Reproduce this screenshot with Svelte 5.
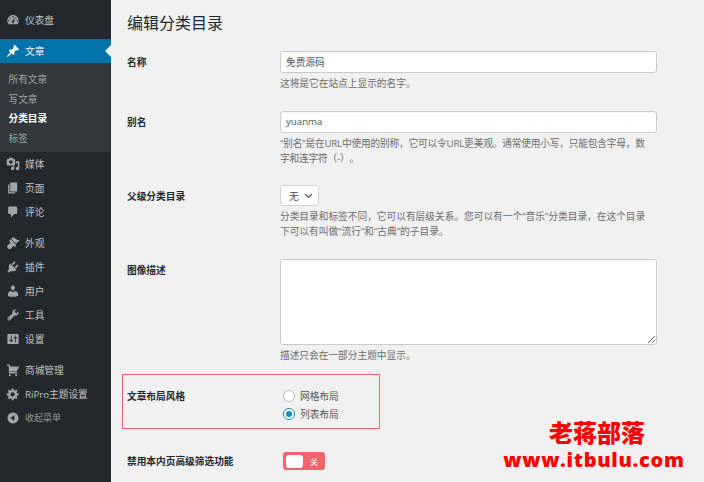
<script lang="ts">
	const menu = [
		{ label: '仪表盘', d: 'M3.76 16h12.48c1.1-1.37 1.76-3.11 1.76-5 0-4.42-3.58-8-8-8s-8 3.58-8 8c0 1.89.66 3.63 1.76 5zM10 4c.55 0 1 .45 1 1s-.45 1-1 1-1-.45-1-1 .45-1 1-1zM6 6c.55 0 1 .45 1 1s-.45 1-1 1-1-.45-1-1 .45-1 1-1zm8 0c.55 0 1 .45 1 1s-.45 1-1 1-1-.45-1-1 .45-1 1-1zm-5.37 5.55L12 7v6c0 1.1-.9 2-2 2s-2-.9-2-2c0-.57.24-1.08.63-1.45zM4 10c.55 0 1 .45 1 1s-.45 1-1 1-1-.45-1-1 .45-1 1-1zm12 0c.55 0 1 .45 1 1s-.45 1-1 1-1-.45-1-1 .45-1 1-1zm-5 3c0-.55-.45-1-1-1s-1 .45-1 1 .45 1 1 1 1-.45 1-1z' },
		{ label: '文章', active: true, sep: true, d: 'M10.44 3.02l1.82-1.82 6.36 6.35-1.83 1.82c-1.05-.68-2.48-.57-3.41.36l-.75.75c-.92.93-1.04 2.35-.35 3.41l-1.83 1.82-2.41-2.41-2.8 2.79c-.42.42-3.38 2.71-3.8 2.29s1.86-3.39 2.28-3.81l2.79-2.79L4.1 9.36l1.83-1.82c1.05.69 2.48.57 3.4-.36l.75-.75c.93-.92 1.05-2.35.36-3.41z' },
		{ label: '媒体', d: 'M13 11V4c0-.55-.45-1-1-1h-1.67L9 1H5L3.67 3H2c-.55 0-1 .45-1 1v7c0 .55.45 1 1 1h10c.55 0 1-.45 1-1zM7 4.5c1.38 0 2.5 1.12 2.5 2.5S8.38 9.5 7 9.5 4.5 8.38 4.5 7 5.62 4.5 7 4.5zM14 6h5v10.5c0 1.38-1.12 2.5-2.5 2.5S14 17.88 14 16.5s1.12-2.5 2.5-2.5c.17 0 .34.02.5.05V9h-3V6zm-4 8.05V13h2v3.5c0 1.38-1.12 2.5-2.5 2.5S7 17.88 7 16.5 8.12 14 9.5 14c.17 0 .34.02.5.05z' },
		{ label: '页面', d: 'M6 15V2h10v13H6zm-1 1h8v2H3V5h2v11z' },
		{ label: '评论', d: 'M5 2h9c1.1 0 2 .9 2 2v7c0 1.1-.9 2-2 2h-2l-5 5v-5H5c-1.1 0-2-.9-2-2V4c0-1.1.9-2 2-2z' },
		{ label: '外观', sep: true, d: 'M14.48 11.06L7.41 3.99l1.5-1.5c.5-.56 2.3-.47 3.51.32 1.21.8 1.43 1.28 2.91 2.1 1.18.64 2.45 1.26 4.45.85zM13.77 11.77L6.7 4.7 4.93 6.47c-.39.39-.39 1.02 0 1.41l1.06 1.06c.39.39.39 1.03 0 1.42-.6.6-1.43 1.11-2.21 1.69-.35.26-.7.53-1.01.84-1.35 1.34-1.34 3.5 0 4.84 1.34 1.34 3.5 1.35 4.84 0 .31-.31.58-.66.84-1.01.58-.78 1.09-1.61 1.69-2.21.39-.39 1.03-.39 1.42 0l1.06 1.06c.39.39 1.02.39 1.41 0z' },
		{ label: '插件', d: 'M13.11 4.36L9.87 7.6 8 5.73l3.24-3.24c.35-.34 1.05-.2 1.56.32.52.51.66 1.21.31 1.55zm-8 1.77l.91-1.12 9.01 9.01-1.19.84c-.71.71-2.63 1.16-3.82 1.16H6.14L4.9 17.26c-.59.59-1.54.59-2.12 0-.59-.58-.59-1.53 0-2.12l1.24-1.24v-3.88c0-1.13.4-3.19 1.09-3.89zm7.26 3.97l3.24-3.24c.34-.35 1.04-.21 1.55.31.52.51.66 1.21.31 1.55l-3.24 3.25z' },
		{ label: '用户', d: 'M10 9.25c-2.27 0-2.73-3.44-2.73-3.44C7 4.02 7.82 2 9.97 2c2.16 0 2.98 2.02 2.71 3.81 0 0-.41 3.44-2.68 3.44zm0 2.57L12.72 10c2.39 0 4.52 2.33 4.52 4.53v2.49s-3.65 1.13-7.24 1.13c-3.65 0-7.24-1.13-7.24-1.13v-2.49c0-2.25 1.94-4.48 4.47-4.48z' },
		{ label: '工具', d: 'M16.68 9.77c-1.34 1.34-3.3 1.67-4.95.99l-5.41 6.52c-.99.99-2.59.99-3.58 0s-.99-2.59 0-3.57l6.52-5.42c-.68-1.65-.35-3.61.99-4.95 1.28-1.28 3.12-1.62 4.72-1.06l-2.89 2.89 2.82 2.82 2.86-2.87c.53 1.58.18 3.39-1.08 4.65zM3.81 16.21c.4.39 1.04.39 1.43 0 .4-.4.4-1.04 0-1.43-.39-.4-1.03-.4-1.43 0-.39.39-.39 1.03 0 1.43z' },
		{ label: '设置', d: 'M18 16V4c0-.55-.45-1-1-1H3c-.55 0-1 .45-1 1v12c0 .55.45 1 1 1h14c.55 0 1-.45 1-1zM8 11h1c.55 0 1 .45 1 1s-.45 1-1 1H8v1.5c0 .28-.22.5-.5.5s-.5-.22-.5-.5V13H6c-.55 0-1-.45-1-1s.45-1 1-1h1V5.5c0-.28.22-.5.5-.5s.5.22.5.5V11zm5-2h-1c-.55 0-1-.45-1-1s.45-1 1-1h1V5.5c0-.28.22-.5.5-.5s.5.22.5.5V7h1c.55 0 1 .45 1 1s-.45 1-1 1h-1v5.5c0 .28-.22.5-.5.5s-.5-.22-.5-.5V9z' },
		{ label: '商城管理', sep: true, d: 'M6 13h9c.55 0 1 .45 1 1s-.45 1-1 1H5c-.55 0-1-.45-1-1V4H2c-.55 0-1-.45-1-1s.45-1 1-1h3c.55 0 1 .45 1 1v2h13l-4 7H6v1zm-.5 3c.83 0 1.5.67 1.5 1.5S6.33 19 5.5 19 4 18.33 4 17.5 4.67 16 5.5 16zm9 0c.83 0 1.5.67 1.5 1.5s-.67 1.5-1.5 1.5-1.5-.67-1.5-1.5.67-1.5 1.5-1.5z' },
		{ label: 'RiPro主题设置', d: 'M18 12h-2.18c-.17.7-.44 1.35-.81 1.93l1.54 1.54-2.1 2.1-1.54-1.54c-.58.36-1.23.63-1.91.79V19H8v-2.18c-.68-.16-1.33-.43-1.91-.79l-1.54 1.54-2.12-2.12 1.54-1.54c-.36-.58-.63-1.23-.79-1.91H1V9.03h2.17c.16-.7.44-1.35.8-1.94L2.43 5.55l2.1-2.1 1.54 1.54c.58-.37 1.24-.64 1.93-.81V2h3v2.18c.68.16 1.33.43 1.91.79l1.54-1.54 2.12 2.12-1.54 1.54c.36.59.64 1.24.8 1.94H18V12zm-8.5 1.5c1.66 0 3-1.34 3-3s-1.34-3-3-3-3 1.34-3 3 1.34 3 3 3z' },
		{ label: '收起菜单', muted: true, d: 'M10 2.16c4.33 0 7.84 3.51 7.84 7.84s-3.51 7.84-7.84 7.84S2.16 14.33 2.16 10 5.71 2.16 10 2.16zm2 11.72V6.12L6.18 9.97z' }
	];
	const subItems = ['所有文章', '写文章', '分类目录', '标签'];
</script>

<div class="page">
	<nav class="sidebar">
		{#each menu as item}
			<a class="item" class:active={item.active} class:sep={item.sep} class:muted={item.muted} href="#top">
				<svg class="icon" viewBox="0 0 20 20" fill="currentColor"><path d={item.d} /></svg>
				<span>{item.label}</span>
			</a>
			{#if item.active}
				<ul class="submenu">
					{#each subItems as sub, i}
						<li class:current={i === 2}>{sub}</li>
					{/each}
				</ul>
			{/if}
		{/each}
	</nav>

	<main class="main">
		<h1>编辑分类目录</h1>

		<section class="row">
			<div class="label">名称</div>
			<div class="field">
				<input class="text" type="text" value="免费源码" />
				<p class="desc">这将是它在站点上显示的名字。</p>
			</div>
		</section>

		<section class="row">
			<div class="label">别名</div>
			<div class="field">
				<input class="text" type="text" value="yuanma" />
				<p class="desc tight">“别名”是在URL中使用的别称，它可以令URL更美观。通常使用小写，只能包含字母，数<br />字和连字符（-）。</p>
			</div>
		</section>

		<section class="row">
			<div class="label">父级分类目录</div>
			<div class="field">
				<div class="select">
					<span>无</span>
					<svg width="9" height="6" viewBox="0 0 9 6" fill="none" stroke="#555" stroke-width="1.2"><path d="M1 1l3.5 3.5L8 1" /></svg>
				</div>
				<p class="desc">分类目录和标签不同，它可以有层级关系。您可以有一个“音乐”分类目录，在这个目录<br />下可以有叫做“流行”和“古典”的子目录。</p>
			</div>
		</section>

		<section class="row">
			<div class="label">图像描述</div>
			<div class="field">
				<textarea class="area"></textarea>
				<p class="desc">描述只会在一部分主题中显示。</p>
			</div>
		</section>

		<section class="row boxed">
			<div class="label">文章布局风格</div>
			<div class="radios">
				<label class="radio"><input type="radio" name="layout" />网格布局</label>
				<label class="radio"><input type="radio" name="layout" checked />列表布局</label>
			</div>
		</section>

		<section class="row switch-row">
			<div class="label">禁用本内页高级筛选功能</div>
			<div class="switch">
				<span class="knob"></span>
				<span class="off">关</span>
			</div>
		</section>

		<div class="watermark">
			<strong>老蒋部落</strong>
			<b>www.itbulu.com</b>
		</div>
	</main>
</div>

<style>
	:global(body) {
		margin: 0;
		background: #f1f1f1;
	}

	.page {
		display: flex;
		width: 704px;
		height: 482px;
		overflow: hidden;
		font-family: "Open Sans", "Noto Sans CJK SC", sans-serif;
		font-size: 9.7px;
		color: #444;
		text-spacing-trim: space-all;
	}

	.sidebar {
		width: 111px;
		flex-shrink: 0;
		background: #23282d;
		padding-top: 8px;
		box-sizing: border-box;
	}

	.item {
		display: flex;
		align-items: center;
		height: 24px;
		padding-left: 6px;
		gap: 5px;
		color: #c0c3c6;
		text-decoration: none;
		position: relative;
	}

	.item.sep {
		margin-top: 7px;
	}

	.item.muted {
		color: #93979a;
		font-size: 9px;
	}

	.item.active {
		background: #0073aa;
		color: #fff;
	}

	.item.active::after {
		content: '';
		position: absolute;
		right: 0;
		top: 6px;
		border: 6px solid transparent;
		border-right-color: #f1f1f1;
		border-left: 0;
	}

	.icon {
		width: 14px;
		height: 14px;
		flex-shrink: 0;
		color: #a0a5aa;
	}

	.active .icon {
		color: #fff;
	}

	.submenu {
		list-style: none;
		margin: 0;
		padding: 7px 0 3px 8.5px;
		background: #32373c;
		color: #a0a4a8;
	}

	.submenu li {
		height: 19.7px;
		line-height: 19.7px;
	}

	.submenu .current {
		color: #fff;
		font-weight: 700;
	}

	.main {
		position: relative;
		flex: 1;
		padding-left: 16px;
	}

	h1 {
		margin: 0;
		height: 51px;
		padding-top: 11px;
		box-sizing: border-box;
		font-size: 16px;
		line-height: 24px;
		font-weight: 400;
		color: #23282d;
	}

	.row {
		display: grid;
		grid-template-columns: 153px 377px;
		margin-bottom: 19.5px;
	}

	.label {
		font-weight: 700;
		color: #23282d;
		line-height: 24px;
	}

	.text {
		display: block;
		width: 100%;
		height: 22px;
		box-sizing: border-box;
		margin: 0;
		padding: 0 5px;
		background: #fff;
		border: 1px solid #ccc;
		border-radius: 3px;
		box-shadow: inset 0 1px 1px rgba(0, 0, 0, 0.05);
		font: inherit;
		color: #555;
		outline: none;
	}

	.desc {
		margin: 3px 0 0;
		line-height: 15px;
		color: #6c6c6c;
	}

	.desc.tight {
		letter-spacing: -0.18px;
	}

	.select {
		display: flex;
		align-items: center;
		gap: 5px;
		width: 39px;
		height: 21px;
		box-sizing: border-box;
		padding-left: 8px;
		background: #fff;
		border: 1px solid #d2d2d2;
		border-radius: 3px;
		color: #444;
	}

	.area {
		display: block;
		width: 100%;
		height: 86px;
		box-sizing: border-box;
		margin: 0;
		background: #fff;
		border: 1px solid #ccc;
		border-radius: 3px;
		box-shadow: inset 0 1px 1px rgba(0, 0, 0, 0.05);
		outline: none;
	}

	.boxed {
		margin: -8px 0 0 -5px;
		width: 258px;
		height: 55px;
		box-sizing: border-box;
		border: 1.5px solid #f0646e;
		padding: 8px 0 0 4px;
		grid-template-columns: 153px 100px;
	}

	.boxed .label {
		padding-top: 1.5px;
	}

	.radios {
		display: flex;
		flex-direction: column;
		gap: 2px;
		padding-top: 5px;
	}

	.radio {
		display: flex;
		align-items: center;
		gap: 5px;
		height: 16px;
		color: #555;
	}

	.radio input {
		appearance: none;
		width: 12px;
		height: 12px;
		margin: 0 0 0 3px;
		background: #fff;
		border: 1px solid #b4b9be;
		border-radius: 50%;
		box-sizing: border-box;
		position: relative;
	}

	.radio input:checked {
		border-color: #1e8cbe;
	}

	.radio input:checked::before {
		content: '';
		position: absolute;
		inset: 2px;
		border-radius: 50%;
		background: #1e8cbe;
	}

	.switch-row {
		margin: 23px 0 0;
	}

	.switch-row .label {
		line-height: 18px;
		padding-top: 1px;
	}

	.switch {
		display: flex;
		align-items: center;
		justify-content: space-between;
		width: 42px;
		height: 18px;
		margin-left: 3px;
		box-sizing: border-box;
		padding: 0 7px 0 3px;
		background: #f0646e;
		border-radius: 3px;
	}

	.knob {
		width: 17px;
		height: 13px;
		background: #fff;
		border-radius: 3px;
	}

	.off {
		color: #fff;
		font-size: 8px;
	}

	/* image watermark sitting over the page */
	.watermark {
		position: absolute;
		left: 393px;
		top: 422px;
		width: 180px;
		display: flex;
		flex-direction: column;
		align-items: center;
		gap: 5px;
		color: #f00;
		white-space: nowrap;
	}

	.watermark strong {
		margin-left: 6px;
		font-size: 24px;
		line-height: 22px;
		font-weight: 900;
	}

	.watermark b {
		font-size: 20px;
		line-height: 22px;
		font-weight: 800;
		letter-spacing: 0.7px;
	}
</style>
